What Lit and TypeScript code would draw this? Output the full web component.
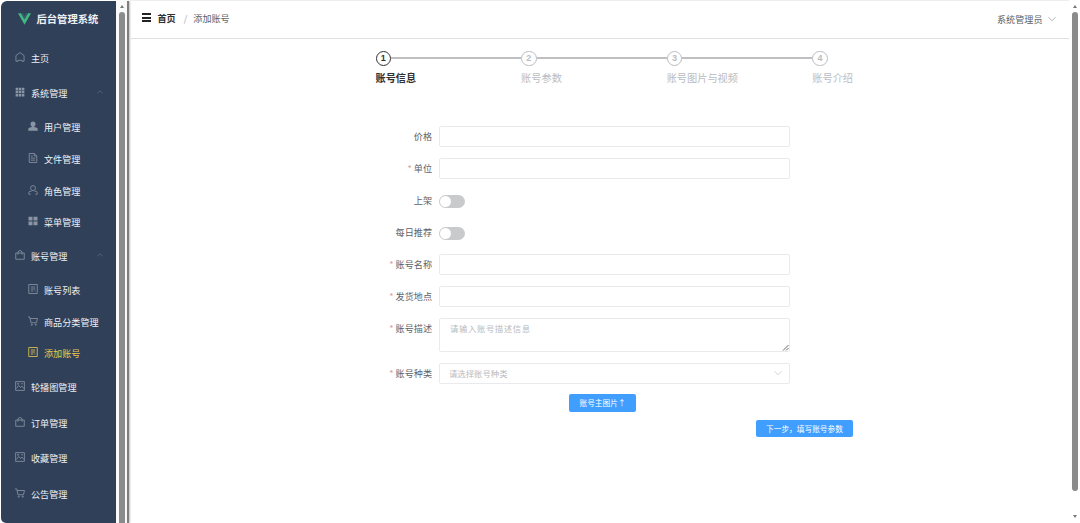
import { LitElement, html, css, svg, nothing } from 'lit';
import { customElement, property } from 'lit/decorators.js';

const ICONS: Record<string, unknown> = {
  home: svg`<path d="M1.500 14.800V5.800L8 .8l6.500 5v9h-3.300v-1.500H4.800v1.500z"/>`,
  grid: svg`<g fill="currentColor" stroke="none"><path d="M1 1h4v4H1zM6 1h4v4H6zM11 1h4v4h-4zM1 6h4v4H1zM6 6h4v4H6zM11 6h4v4h-4zM1 11h4v4H1zM6 11h4v4H6zM11 11h4v4h-4z"/></g>`,
  userSolid: svg`<g fill="currentColor" stroke="none"><circle cx="8" cy="4.600" r="4"/><path d="M6 7h4v2.500l4 1.300q1.500.5 1.500 1.800V15.500H.5v-2.900q0-1.300 1.500-1.800l4-1.300z"/></g>`,
  doc: svg`<path d="M2 .8h8l4 4v10.400H2zM10 .8v4h4M4.500 5h3M4.500 8.200h7M4.500 11.400h7"/>`,
  user: svg`<circle cx="8" cy="5" r="4"/><path d="M5.500 10.200H3.300q-2 .2-2 2v2.600h3M10.500 10.200h2.200q2 .2 2 2v2.600h-3"/>`,
  menu: svg`<g fill="currentColor" stroke="none"><path d="M.8 1.200h6.400v6H.8zM8.800 1.200h6.400v6H8.800zM.8 8.800h6.400v6H.8zM8.800 8.800h6.400v6H8.800z"/></g>`,
  bag: svg`<path d="M1.200 4.800h13.600v10H1.200zM4.800 7.500V4Q5 .8 8 .8t3.200 3.200v3.500"/>`,
  list: svg`<path d="M1.200.8h13.600v14.400H1.200zM4.500 4.800h7M4.500 8h7M4.500 11.200h4M10.500 11.200h1.500"/>`,
  cart: svg`<path d="M0 1.500h2.800l2 9.300h8.700L15.200 4H3.500"/><circle cx="6" cy="13.900" r="1"/><circle cx="12.300" cy="13.900" r="1"/>`,
  picture: svg`<path d="M1 1h14v14H1zM2 12l4-4.800 2.800 3 2.400-2L14.300 12"/><circle cx="5" cy="4.500" r=".9"/><circle cx="11.300" cy="4.500" r=".6"/>`,
  up: svg`<path d="M1 11.500l7-7 7 7"/>`,
  down: svg`<path d="M1 4.500l7 7 7-7"/>`,
};

@customElement('ui-icon')
class UiIcon extends LitElement {
  @property() name = '';
  static styles = css`
    :host { display: block; width: 10px; height: 10px; flex: none; }
    svg { display: block; width: 100%; height: 100%; fill: none; stroke: currentColor; stroke-width: 1.3; }
  `;
  render() {
    return html`<svg viewBox="0 0 16 16">${ICONS[this.name]}</svg>`;
  }
}

@customElement('ui-scrollbar')
class UiScrollbar extends LitElement {
  static styles = css`
    :host { display: flex; flex-direction: column; align-items: center; box-sizing: border-box; }
    .arrow { width: 0; height: 0; flex: none; border: 2.5px solid transparent; }
    .top { border-top: 0; border-bottom: 3.5px solid #777; margin-top: 5px; }
    .bottom { border-bottom: 0; border-top: 3.5px solid #777; margin-bottom: 5px; }
    .thumb { flex: 1; width: 6px; border-radius: 3px; background: #8b8b8b; margin: 4px 0 24px; }
  `;
  render() {
    return html`<div class="arrow top"></div><div class="thumb"></div><div class="arrow bottom"></div>`;
  }
}

interface Item { icon: string; text: string; sub?: boolean; open?: boolean; active?: boolean }

const MENU: Item[] = [
  { icon: 'home', text: '主页' },
  { icon: 'grid', text: '系统管理', open: true },
  { icon: 'userSolid', text: '用户管理', sub: true },
  { icon: 'doc', text: '文件管理', sub: true },
  { icon: 'user', text: '角色管理', sub: true },
  { icon: 'menu', text: '菜单管理', sub: true },
  { icon: 'bag', text: '账号管理', open: true },
  { icon: 'list', text: '账号列表', sub: true },
  { icon: 'cart', text: '商品分类管理', sub: true },
  { icon: 'list', text: '添加账号', sub: true, active: true },
  { icon: 'picture', text: '轮播图管理' },
  { icon: 'bag', text: '订单管理' },
  { icon: 'picture', text: '收藏管理' },
  { icon: 'cart', text: '公告管理' },
];

@customElement('side-menu')
class SideMenu extends LitElement {
  static styles = css`
    :host { display: block; box-sizing: border-box; background: #304059; color: #edf1f5; border-radius: 6px 0 0 5px; overflow: hidden; }
    .brand { height: 38.9px; box-sizing: border-box; padding: 0 0 3px 17px; display: flex; align-items: center; gap: 5.5px; font-size: 10.3px; font-weight: 700; white-space: nowrap; }
    .logo { width: 13px; height: 12px; display: block; }
    .item { height: 35.65px; padding: 0 13px 0 14px; display: flex; align-items: center; gap: 6px; font-size: 9.1px; white-space: nowrap; }
    .item ui-icon { color: #8995a4; margin-top: -2px; }
    .item.sub { height: 31.8px; padding-left: 27px; }
    .item.active, .item.active ui-icon { color: #e9c94f; }
    .item ui-icon.caret { width: 6px; height: 6px; margin-left: auto; color: #7a8798; }
  `;
  render() {
    return html`
      <div class="brand">
        <svg class="logo" viewBox="0 0 26 23"><path fill="#42b883" d="M0 0h6l7 12.500L20 0h6L13 23z"/><path fill="#35606e" d="M6 0h4l3 5.500L16 0h4l-7 12.500z"/></svg>
        <span>后台管理系统</span>
      </div>
      ${MENU.map(i => html`
        <div class="item ${i.sub ? 'sub' : ''} ${i.active ? 'active' : ''}">
          <ui-icon name=${i.icon}></ui-icon><span>${i.text}</span>
          ${i.open ? html`<ui-icon class="caret" name="up"></ui-icon>` : nothing}
        </div>`)}
    `;
  }
}

@customElement('step-bar')
class StepBar extends LitElement {
  static styles = css`
    :host { display: flex; color: #b9bcc2; }
    .step { width: 145.6px; flex: none; }
    .step:last-child { width: 44px; }
    .head { display: flex; align-items: center; height: 15.500px; }
    .num { box-sizing: border-box; width: 15.500px; height: 15.500px; border: 1.5px solid #b9bcc2; border-radius: 50%; display: flex; align-items: center; justify-content: center; font: 700 9px "Liberation Sans", sans-serif; flex: none; }
    .line { flex: 1; height: 2px; background: #bfbfc1; }
    .title { font-size: 10.200px; line-height: 16px; margin-top: 4px; white-space: nowrap; }
    .on { color: #303133; }
    .on .num { border-color: #303133; }
    .on .title { font-weight: 700; }
  `;
  render() {
    const steps = ['账号信息', '账号参数', '账号图片与视频', '账号介绍'];
    return html`${steps.map((s, i) => html`
      <div class="step ${i === 0 ? 'on' : ''}">
        <div class="head"><div class="num">${i + 1}</div>${i < 3 ? html`<div class="line"></div>` : nothing}</div>
        <div class="title">${s}</div>
      </div>`)}`;
  }
}

@customElement('app-root')
class AppRoot extends LitElement {
  static styles = css`
    :host { display: flex; width: 1080px; height: 523px; box-sizing: border-box; overflow: hidden; background: #fff; font-family: "Noto Sans CJK SC", sans-serif; color: #606266; }
    side-menu { width: 115px; margin: 1px 0 0 1px; flex: none; }
    .side-bar { width: 11px; flex: none; background: #fafafa; overflow: hidden; }
    .side-bar ui-scrollbar { height: 560px; }
    .divider { width: 2px; flex: none; background: #7f7f7f; margin: 1px 2px 0 0; box-shadow: 1px 0 2px #bbb; }
    .main { flex: 1; min-width: 0; }
    .page-bar { width: 11px; flex: none; }
    .header { height: 38.500px; box-sizing: border-box; border-top: 1px solid #eee; border-bottom: 1px solid #e0e0e0; padding: 0 13px 3px 10.500px; display: flex; align-items: center; font-size: 9.100px; }
    .burger { display: flex; flex-direction: column; gap: 1.500px; width: 9px; margin-right: 7px; }
    .burger i { height: 2px; background: #222; }
    .home { color: #303133; font-weight: 700; }
    .slash { color: #a5a8ae; margin: 0 6px 0 8px; }
    .who { margin-left: auto; margin-right: 5.500px; padding-top: 2px; }
    .header ui-icon { width: 8px; height: 8px; color: #888; margin-top: 2px; }
    step-bar { margin: 12px 0 0 244.500px; }
    .form { width: 414px; margin: 39.500px 0 0 244.500px; display: flex; flex-direction: column; gap: 11.100px; }
    .row { display: flex; font-size: 9.100px; line-height: 20.500px; }
    .label { width: 56.500px; text-align: right; margin-right: 7px; flex: none; white-space: nowrap; }
    .req::before { content: "*"; color: #d99; margin-right: 2px; }
    .box { box-sizing: border-box; flex: none; width: 351px; height: 21px; border: 1px solid #e8eaed; border-radius: 2px; padding: 0 7px 0 9px; display: flex; align-items: center; justify-content: space-between; color: #b8bbc0; font-size: 8.400px; }
    .area { height: 33.500px; align-items: flex-start; padding: 0; justify-content: space-between; }
    .area span { line-height: 18px; padding-left: 10px; letter-spacing: .6px; }
    .grip { width: 7px; height: 7px; align-self: flex-end; stroke: #666; fill: none; }
    .box ui-icon { width: 8px; height: 8px; }
    .switch { width: 26px; height: 13px; box-sizing: border-box; border-radius: 7px; background: #c9cacc; padding: 1px; margin: 5px 0 3px; }
    .switch i { display: block; width: 11px; height: 11px; border-radius: 50%; background: #fff; }
    .btn { height: 17.500px; box-sizing: border-box; padding-bottom: 1px; border-radius: 2px; background: #409eff; color: #fff; display: flex; align-items: center; justify-content: center; font-size: 7.700px; white-space: nowrap; }
    .upload { width: 66.500px; margin: 10.700px 0 0 438.300px; }
    .next { width: 97px; margin: 8px 0 0 625px; }
  `;
  private row(label: string, req: boolean, body: unknown) {
    return html`<div class="row"><div class="label ${req ? 'req' : ''}">${label}</div>${body}</div>`;
  }
  render() {
    const input = html`<div class="box"></div>`;
    const toggle = html`<div class="switch"><i></i></div>`;
    return html`
      <side-menu></side-menu>
      <div class="side-bar"><ui-scrollbar></ui-scrollbar></div>
      <div class="divider"></div>
      <div class="main">
        <div class="header">
          <div class="burger"><i></i><i></i><i></i></div>
          <span class="home">首页</span><span class="slash">/</span><span>添加账号</span>
          <span class="who">系统管理员</span><ui-icon name="down"></ui-icon>
        </div>
        <step-bar></step-bar>
        <div class="form">
          ${this.row('价格', false, input)}
          ${this.row('单位', true, input)}
          ${this.row('上架', false, toggle)}
          ${this.row('每日推荐', false, toggle)}
          ${this.row('账号名称', true, input)}
          ${this.row('发货地点', true, input)}
          ${this.row('账号描述', true, html`<div class="box area"><span>请输入账号描述信息</span><svg class="grip" viewBox="0 0 7 7"><path d="M1 6.500L6.500 1M4 6.500L6.500 4"/></svg></div>`)}
          ${this.row('账号种类', true, html`<div class="box"><span>请选择账号种类</span><ui-icon name="down"></ui-icon></div>`)}
        </div>
        <div class="btn upload">账号主图片↑</div>
        <div class="btn next">下一步，填写账号参数</div>
      </div>
      <ui-scrollbar class="page-bar"></ui-scrollbar>
    `;
  }
}
